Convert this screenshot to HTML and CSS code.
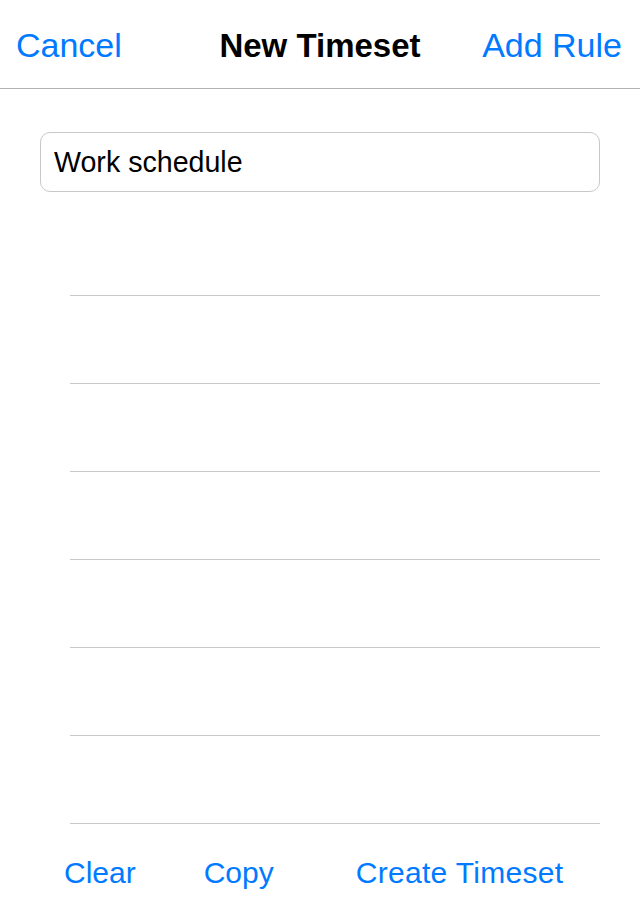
FILE: index.html
```html
<!DOCTYPE html>
<html>
<head>
<meta charset="utf-8">
<link rel="stylesheet" href="styles.css">
</head>
<body>
<div class="screen">
  <header class="navbar">
    <span class="nav-btn left">Cancel</span>
    <span class="nav-title">New Timeset</span>
    <span class="nav-btn right">Add Rule</span>
  </header>
  <div class="name-field">Work schedule</div>
  <ul class="rules">
    <li class="rule"></li>
    <li class="rule"></li>
    <li class="rule"></li>
    <li class="rule"></li>
    <li class="rule"></li>
    <li class="rule"></li>
    <li class="rule"></li>
  </ul>
  <footer class="toolbar">
    <span class="tool-btn clear">Clear</span>
    <span class="tool-btn copy">Copy</span>
    <span class="tool-btn create">Create Timeset</span>
  </footer>
</div>
</body>
</html>
```
FILE: styles.css
```css
html, body {
  margin: 0;
  padding: 0;
  background: #fff;
}
body {
  font-family: "Liberation Sans", Arial, sans-serif;
  width: 640px;
  height: 920px;
  overflow: hidden;
}
.screen {
  display: flex;
  flex-direction: column;
}
.navbar {
  height: 85px;
  box-sizing: content-box;
  border-bottom: 1px solid #b2b2b2;
  display: grid;
  grid-template-columns: 1fr auto 1fr;
  align-items: center;
  padding: 3px 16px 0 16px;
}
.nav-btn {
  color: #007aff;
  font-size: 34px;
}
.nav-btn.left {
  justify-self: start;
}
.nav-btn.right {
  justify-self: end;
  margin-right: 2px;
}
.nav-title {
  color: #000;
  font-size: 33px;
  font-weight: bold;
}
.name-field {
  margin: 43px 40px 0 40px;
  height: 60px;
  box-sizing: border-box;
  border: 1px solid #c8c8c8;
  border-radius: 10px;
  display: flex;
  align-items: center;
  padding: 0 0 0 13px;
  font-size: 28.6px;
  color: #000;
}
.rules {
  list-style: none;
  margin: 16px 40px 0 70px;
  padding: 0;
}
.rule {
  height: 87px;
  border-bottom: 1px solid #c8c8c8;
}
.toolbar {
  display: flex;
  padding: 32px 0 0 64px;
  font-size: 30px;
  color: #007aff;
}
.copy {
  margin-left: 68px;
}
.create {
  margin-left: 82px;
  letter-spacing: 0.3px;
}
```
